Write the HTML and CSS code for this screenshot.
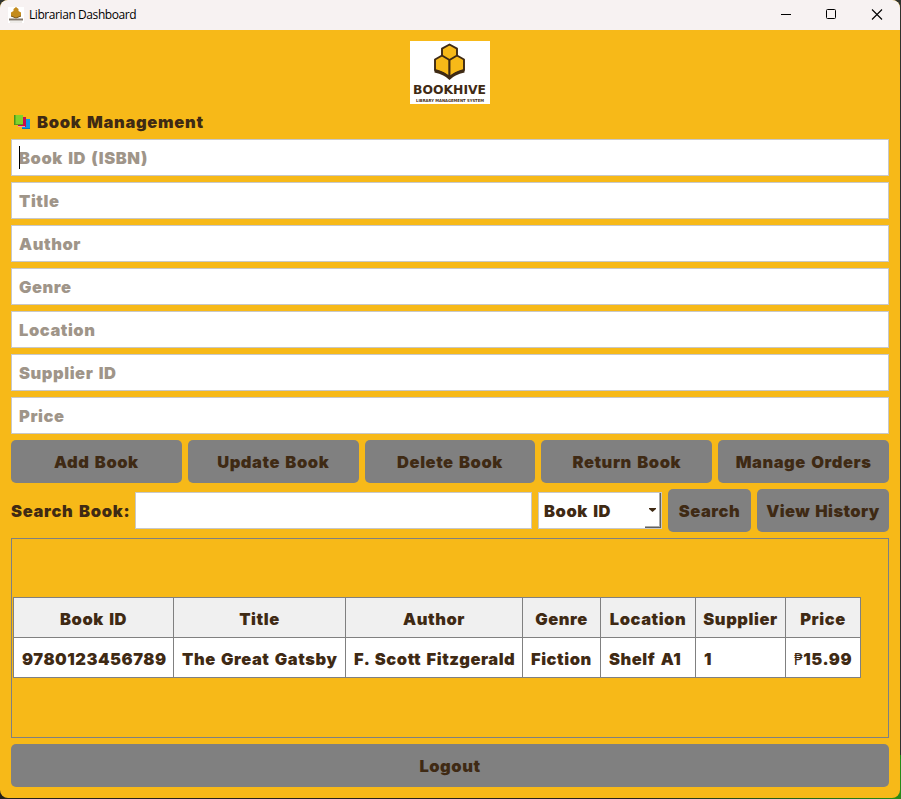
FILE: index.html
```html
<!DOCTYPE html>
<html lang="en">
<head>
<meta charset="utf-8">
<title>Librarian Dashboard</title>
<link rel="stylesheet" href="styles.css">
</head>
<body>
<div class="window">
  <header class="titlebar">
    <svg class="app-icon" viewBox="0 0 16 16"><rect width="16" height="16" fill="#fff"/><path d="M8 0l2.500 2v2L13 5.500v3.500L8 11 3 9V5.500L5.500 4V2z" fill="#c38b1d"/><path d="M3 9l5 2 5-2" stroke="#79551b" fill="none"/><path d="M1 12.500h14" stroke="#83786b" stroke-width="2"/><path d="M2 15h12" stroke="#ddd8d2"/></svg>
    <span class="caption">Librarian Dashboard</span>
    <svg class="controls" viewBox="0 0 102 12"><path d="M0 5.500h10" stroke="#000"/><rect x="45.500" y=".500" width="9" height="9" rx="1" fill="none" stroke="#000"/><path d="M91 .500l10 10M101 .500L91 10.500" stroke="#000" stroke-width="1.100"/></svg>
  </header>
  <main class="content">
    <svg class="logo" viewBox="0 0 80 63">
      <rect width="80" height="63" fill="#fff"/>
      <g fill="#f7b918" stroke="#3f2a14" stroke-width="1.900" stroke-linejoin="round">
        <path d="M39.500 3.500l7.500 4.200v8.300l-7.500 4.200-7.500-4.200V7.700z"/>
        <path d="M32 14.500l7.500 4.500v18q-5-5.500-14.500-8V18.500z"/>
        <path d="M47 14.500L39.500 19v18q5-5.500 14.500-8V18.500z"/>
      </g>
      <path d="M24.500 28.500q10 2 15 6.500 5-4.500 15-6.500v3q-10 2-15 7.500-5-5.500-15-7.500z" fill="#3f2a14"/>
      <text class="logo-name" x="3" y="53" textLength="73" lengthAdjust="spacingAndGlyphs">BOOKHIVE</text>
      <text class="logo-tag" x="6" y="60.500" textLength="68" lengthAdjust="spacingAndGlyphs">LIBRARY MANAGEMENT SYSTEM</text>
    </svg>
    <h1 class="heading">
      <svg class="books" viewBox="0 0 17 15"><path d="M8 4h8v10H8z" fill="#1097e5"/><path d="M8 13h8v1H8z" fill="#087bb6"/><path d="M4 2h8v10H4z" fill="#c90d4c"/><path d="M4 11h7v1H4z" fill="#f3a3a0"/><path d="M0 0h9v10H1z" fill="#83d32a"/><path d="M0 0h1.500v10H0z" fill="#48951d"/><path d="M1 9h8v1H1z" fill="#539e20"/></svg>
      <span>Book Management</span>
    </h1>
    <div class="fields">
      <div class="field"><span class="caret"></span>Book ID (ISBN)</div>
      <div class="field">Title</div>
      <div class="field">Author</div>
      <div class="field">Genre</div>
      <div class="field">Location</div>
      <div class="field">Supplier ID</div>
      <div class="field">Price</div>
    </div>
    <div class="actions">
      <button>Add Book</button><button>Update Book</button><button>Delete Book</button><button>Return Book</button><button>Manage Orders</button>
    </div>
    <div class="search">
      <label for="query">Search Book:</label>
      <input id="query" class="query">
      <div class="select">Book ID<span class="drop"><svg viewBox="0 0 7 4"><path d="M0 0h7v1L3.500 4 0 1z" fill="#3f2a14"/></svg></span></div>
      <button class="find">Search</button>
      <button class="history">View History</button>
    </div>
    <section class="results">
      <table>
        <colgroup><col class="c-id"><col class="c-title"><col class="c-author"><col class="c-genre"><col class="c-location"><col class="c-supplier"><col class="c-price"></colgroup>
        <tr><th>Book ID</th><th>Title</th><th>Author</th><th>Genre</th><th>Location</th><th>Supplier</th><th>Price</th></tr>
        <tr><td class="digits">9780123456789</td><td>The Great Gatsby</td><td>F. Scott Fitzgerald</td><td>Fiction</td><td>Shelf A1</td><td>1</td><td><span class="peso">₱</span>15.99</td></tr>
      </table>
    </section>
    <button class="logout">Logout</button>
  </main>
</div>
</body>
</html>
```
FILE: styles.css
```css
* { box-sizing: border-box; }
html { height: 100%; background: linear-gradient(#30332f 0 755px, #17910f 755px); }
body { margin: 0; height: 799px; overflow: hidden; background: linear-gradient(90deg, #24211c 0 70%, #288a18); background-size: 100% 40px; background-position: bottom; background-repeat: no-repeat; }
.window { width: 900px; height: 798px; border-radius: 8px; overflow: hidden; background: #f7b918; color: #3f2a14; font: 870 16.5px/22px Inter, "Liberation Sans", sans-serif; letter-spacing: .55px; word-spacing: 1.5px; }
.titlebar { height: 30px; padding: 0 17px 0 8px; display: flex; align-items: center; background: #f7f2f2; word-spacing: 0; }
.app-icon { width: 16px; height: 16px; margin-right: 5px; }
.caption { font: 12px/16px "Open Sans", sans-serif; color: #000; letter-spacing: -.42px; }
.controls { width: 102px; height: 12px; margin-left: auto; }
.content { padding: 11px; height: 768px; display: flex; flex-direction: column; gap: 6px; }
.logo { width: 80px; height: 63px; align-self: center; flex: none; letter-spacing: 0; word-spacing: 0; }
.logo-name { font: bold 13px "DejaVu Sans", sans-serif; fill: #3f2a14; }
.logo-tag { font: bold 4px "DejaVu Sans", sans-serif; fill: #3f2a14; }
.heading { height: 23px; margin: 0; padding-left: 3px; display: flex; align-items: center; gap: 6px; font: inherit; letter-spacing: .7px; }
.books { width: 17px; height: 15px; position: relative; top: 1px; }
.fields { display: grid; gap: 6px; }
.field { position: relative; height: 37px; padding: 0 7px; border: 1px solid #c8c8c8; background: #fff; color: #9f9589; line-height: 36px; }
.caret { position: absolute; left: 7px; top: 6px; width: 1px; height: 23px; background: #000; }
button { border: 0; border-radius: 5px; padding: 1px 0 0; background: #808080; color: inherit; font: inherit; letter-spacing: inherit; word-spacing: inherit; height: 43px; line-height: 43px; }
.actions { display: grid; grid-template-columns: repeat(5, 1fr); gap: 6px; }
.search { display: flex; align-items: center; height: 43px; }
.search label { width: 124px; letter-spacing: .7px; white-space: nowrap; }
.query { width: 397px; height: 37px; border: 1px solid #c8c8c8; background: #fff; padding: 0 7px; font: inherit; margin-right: 6px; }
.select { width: 124px; height: 37px; padding-left: 5px; display: flex; justify-content: space-between; border: 1px solid #c8c8c8; background: #fff; line-height: 36px; }
.drop { width: 16px; height: 35px; border-right: 1px solid #606060; border-bottom: 1px solid #606060; box-shadow: inset -1px -1px #aaa; display: flex; justify-content: center; align-items: center; }
.drop svg { width: 7px; height: 4px; }
.find { width: 83px; margin: 0 6px; }
.history { width: 132px; letter-spacing: .4px; }
.results { height: 200px; padding: 58px 1px; border: 1px solid #808080; }
table { width: 848px; table-layout: fixed; border-collapse: collapse; word-spacing: 1.5px; }
.c-id { width: 160px; } .c-title { width: 172px; } .c-author { width: 177px; } .c-genre { width: 78px; } .c-location { width: 95px; } .c-supplier { width: 90px; } .c-price { width: 75px; }
th, td { height: 40px; padding: 3px 0 0; border: 1px solid #808080; font: inherit; white-space: nowrap; }
th { background: #f0f0f0; text-align: center; }
td { background: #fff; padding-left: 8px; text-align: left; }
.digits { letter-spacing: .5px; }
.peso { font: 16px "DejaVu Sans Condensed", "DejaVu Sans", sans-serif; letter-spacing: 0; }
```
